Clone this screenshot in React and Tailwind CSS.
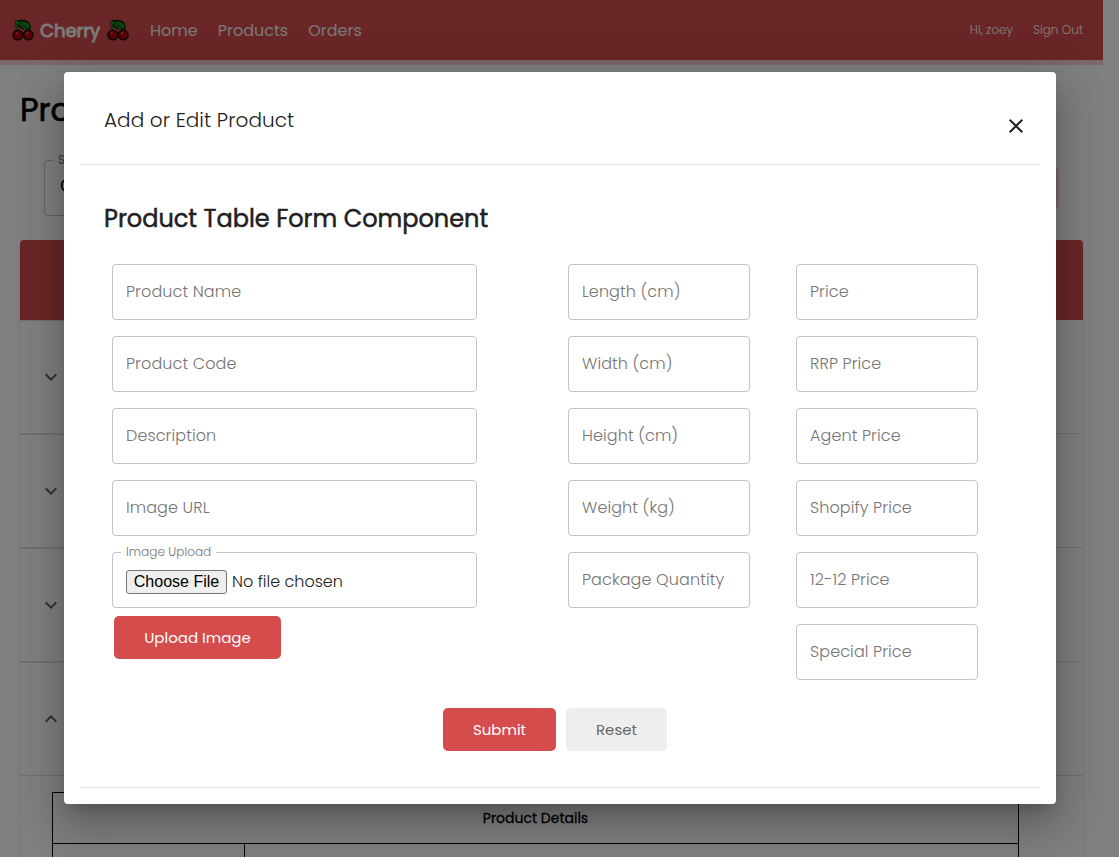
const field = "flex h-14 items-center rounded-[4px] border border-[#c4c4c4] px-[13px] text-base font-light tracking-[0.1px] text-[#757575]";

function Cherries() {
  return (
    <svg viewBox="0 0 22 22" className="h-[22px] w-[22px] shrink-0">
      <path d="M4.500 2 C10 1 15 1.500 17 4.500 C18.300 6.500 18.300 8.500 18 10 C14 10.500 10 10 7.500 7.500Z" fill="#0a8a10" stroke="#111" strokeWidth="1.300" />
      <path d="M4.700 1.500 L5.200 12 M5 3 C9 6 13 9 15.500 12" fill="none" stroke="#111" strokeWidth="2.600" />
      <path d="M4.700 1.500 L5.200 13 M5 3 C9 6 13 9 15.500 13" fill="none" stroke="#18b51c" strokeWidth="1.300" />
      <circle cx="5.800" cy="16" r="4.900" fill="#b4000e" stroke="#111" strokeWidth="1.300" />
      <circle cx="16.200" cy="16" r="4.900" fill="#b4000e" stroke="#111" strokeWidth="1.300" />
      <circle cx="4.800" cy="14.300" r="1" fill="#e85a64" />
      <circle cx="15.200" cy="14.300" r="1" fill="#e85a64" />
    </svg>
  );
}

function Chevron({ up }) {
  return (
    <svg viewBox="0 0 24 24" className="ml-[19px] h-6 w-6 fill-[#666]">
      {up ? <path d="M7.410 15.410 12 10.830l4.590 4.580L18 14l-6-6-6 6z" /> : <path d="M7.410 8.590 12 13.170l4.590-4.580L18 10l-6 6-6-6z" />}
    </svg>
  );
}

function Field({ label }) {
  return (
    <div className={field}>
      <span>{label}</span>
    </div>
  );
}

function Background() {
  return (
    <div className="w-[1103px]">
      <header className="flex h-[65px] items-center border-b-[5px] border-[#f6d0d0] bg-[#d44c4c] pr-5 pl-[11.500px] text-white">
        <Cherries />
        <span className="ml-[6.500px] w-[66.500px] pt-0.5 text-lg font-normal whitespace-nowrap text-[#f4f4f4] [-webkit-text-stroke:0.9px_#f4f4f4]">Cherry</span>
        <Cherries />
        <nav className="ml-[21.500px] flex gap-5 pt-0.5 text-base text-[#f0f0f0]">
          <span>Home</span>
          <span>Products</span>
          <span>Orders</span>
        </nav>
        <div className="ml-auto flex gap-5 text-xs font-light">
          <span>Hi, zoey</span>
          <span>Sign Out</span>
        </div>
      </header>
      <main className="px-5">
        <h1 className="mt-[21px] h-12 text-[32px] leading-[48px] font-normal text-black [-webkit-text-stroke:0.7px_black]">Pro</h1>
        <div className="mt-[20px] ml-6 flex h-[62px] justify-between pr-6">
          <fieldset className="h-[62px] w-[200px] rounded-[4px] border border-[#c4c4c4] px-2">
            <legend className="px-[5px] text-xs leading-3 text-[#757575]">S</legend>
            <div className="px-[7px] pt-1.5 text-lg text-black">C</div>
          </fieldset>
          <div className="mt-3.5 h-10 w-[110px] rounded-[4px] bg-[#f6d0d0]" />
        </div>
        <section className="mt-6 h-[640px] rounded-[4px] shadow">
          <div className="h-20 rounded-t-[4px] bg-[#d44c4c]" />
          {[false, false, false, true].map((up, i) => (
            <div key={i} className="flex h-[114px] items-center border-b border-[#e0e0e0]">
              <div className="flex h-full w-16 items-center border-t border-[#e0e0e0]">
                <Chevron up={up} />
              </div>
            </div>
          ))}
          <div className="mt-4 mr-16 ml-8 border border-black">
            <div className="flex h-[51px] items-center justify-center border-b border-black text-sm font-normal [-webkit-text-stroke:0.3px_black]">Product Details</div>
            <div className="h-20 w-[192px] border-r border-black" />
          </div>
        </section>
      </main>
    </div>
  );
}

export default function App() {
  return (
    <div className="relative h-[857px] w-[1119px] overflow-hidden bg-white font-['Poppins','Inter',sans-serif]">
      <Background />
      <div className="absolute inset-0 flex items-start bg-black/50 pt-[72px] pl-16">
        <div className="h-[732px] w-[992px] rounded-[4px] bg-white px-4 shadow-[0_11px_15px_-7px_rgba(0,0,0,0.2),0_24px_38px_3px_rgba(0,0,0,0.14),0_9px_46px_8px_rgba(0,0,0,0.12)]">
          <div className="flex h-[93px] justify-between border-b border-[#e0e0e0] pr-3 pl-6">
            <h2 className="pt-8 text-xl leading-8 font-light tracking-[0.08px] text-[#212121]">Add or Edit Product</h2>
            <svg viewBox="0 0 24 24" className="mt-[42px] h-6 w-6 fill-[#212121]">
              <path d="M19 6.410 17.590 5 12 10.590 6.410 5 5 6.410 10.590 12 5 17.590 6.410 19 12 13.410 17.590 19 19 17.590 13.410 12z" />
            </svg>
          </div>
          <div className="h-[623px] border-b border-[#e0e0e0] px-6">
            <h3 className="pt-9 text-2xl leading-9 font-normal text-[#212121] [-webkit-text-stroke:0.5px_#212121]">Product Table Form Component</h3>
            <div className="mt-[27px] flex pl-2">
              <div className="flex w-[365px] flex-col gap-4">
                <Field label="Product Name" />
                <Field label="Product Code" />
                <Field label="Description" />
                <Field label="Image URL" />
                <div>
                  <fieldset className="-mt-1.5 h-[62px] rounded-[4px] border border-[#c4c4c4] px-2">
                    <legend className="px-[5px] text-xs leading-3 font-light tracking-[0.05px] text-[#757575]">Image Upload</legend>
                    <div className="flex items-center gap-[5px] pt-3 pl-[5px] text-base leading-6 font-light text-[#212121]">
                      <button className="h-6 w-[101px] rounded-[3px] border border-[#767676] bg-[#efefef] font-['Liberation_Sans',sans-serif] text-base leading-5 text-black">Choose File</button>
                      <span>No file chosen</span>
                    </div>
                  </fieldset>
                  <button className="mt-2 ml-0.5 block h-[43px] w-[167px] rounded-[5px] bg-[#d44c4c] pt-0.5 text-[15px] text-white">Upload Image</button>
                </div>
              </div>
              <div className="ml-[91px] flex w-[182px] flex-col gap-4">
                <Field label="Length (cm)" />
                <Field label="Width (cm)" />
                <Field label="Height (cm)" />
                <Field label="Weight (kg)" />
                <Field label="Package Quantity" />
              </div>
              <div className="ml-[46px] flex w-[182px] flex-col gap-4">
                <Field label="Price" />
                <Field label="RRP Price" />
                <Field label="Agent Price" />
                <Field label="Shopify Price" />
                <Field label="12-12 Price" />
                <Field label="Special Price" />
              </div>
            </div>
            <div className="mt-7 flex gap-2.5 pl-[339px] text-[15px]">
              <button className="h-[43px] w-[113px] rounded-[5px] bg-[#d44c4c] pt-0.5 text-white">Submit</button>
              <button className="h-[43px] w-[101px] rounded-[5px] bg-[#eeeeee] pt-0.5 text-[#666]">Reset</button>
            </div>
          </div>
        </div>
      </div>
    </div>
  );
}
